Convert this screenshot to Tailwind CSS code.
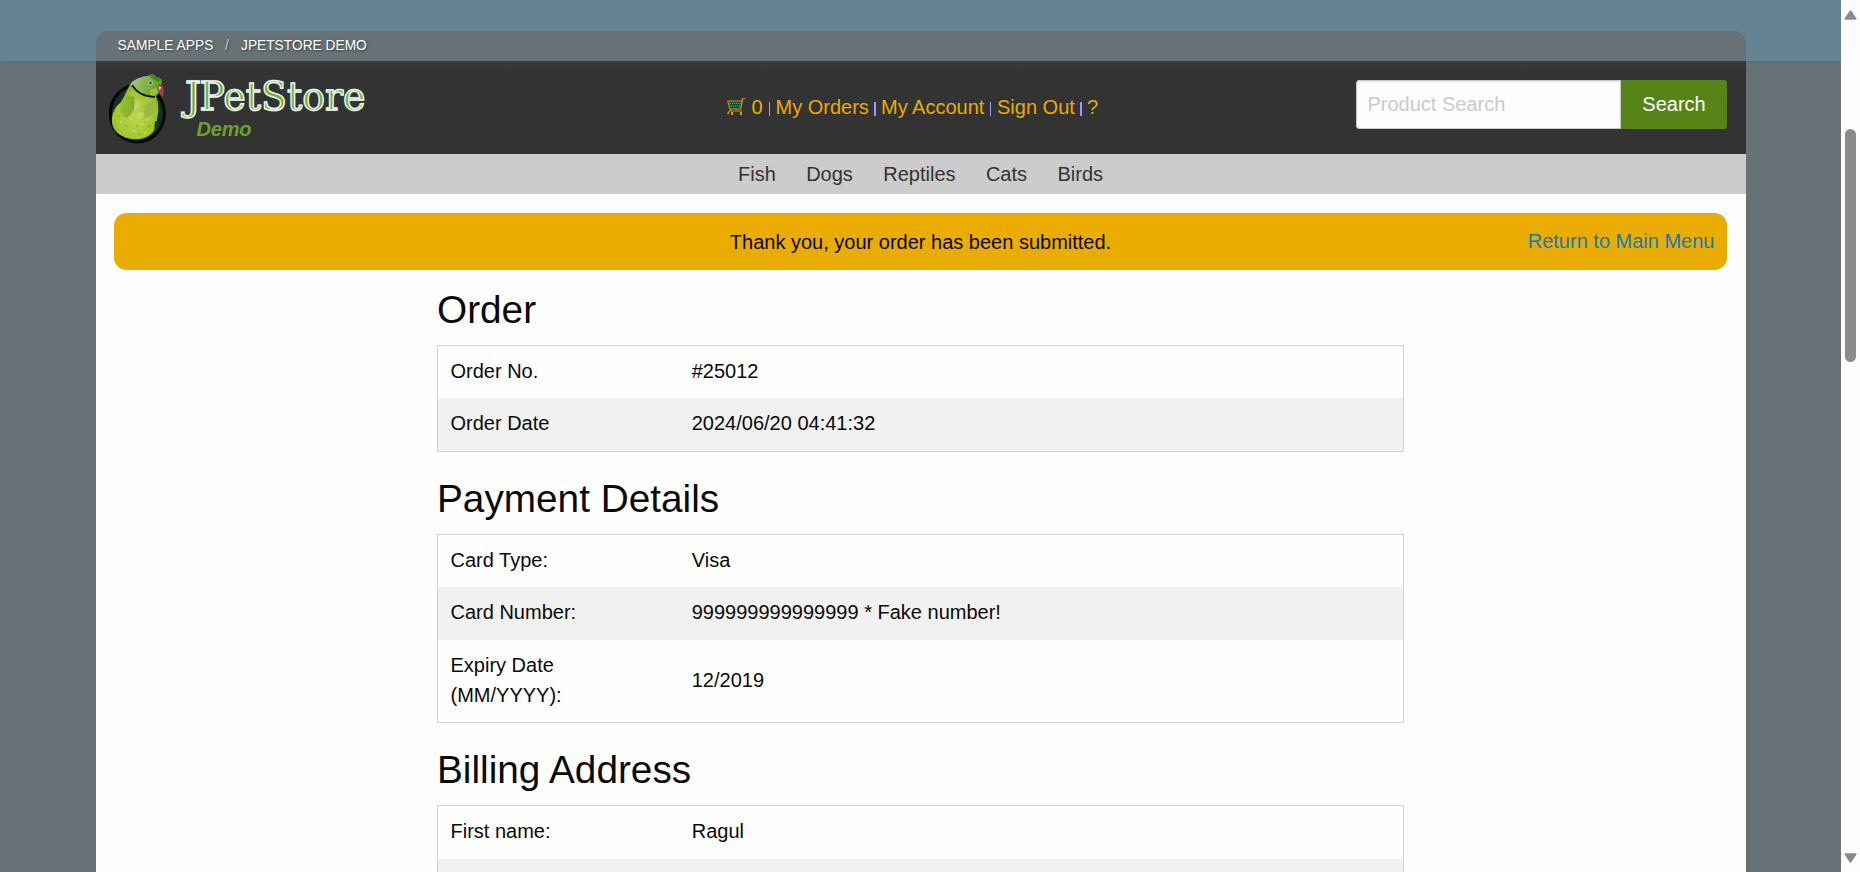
<!DOCTYPE html>
<html lang="en">
<head>
<meta charset="utf-8">
<title>JPetStore Demo</title>
<script src="https://cdn.jsdelivr.net/npm/@tailwindcss/browser@4"></script>
</head>
<body class="flex h-[872px] w-[1860px] overflow-hidden bg-[#677277] font-['Liberation_Sans',Arial,sans-serif] text-[20px] leading-[30px] text-[#0a0a0a]">
<div class="flex h-full w-[1841px] flex-col overflow-hidden">
  <div class="flex h-[61px] shrink-0 items-end bg-[#668394] pr-[95px] pl-24 shadow-[0_1px_2px_rgba(0,0,0,0.06)]">
    <nav class="flex h-[30px] w-full items-center rounded-t-[12px] bg-[#677277] pl-[21.5px] text-[13.75px] leading-[28px] text-white [text-shadow:1px_1px_2px_rgba(0,0,0,0.5)]">
      <a class="w-[107.5px] tracking-[0.03px]">SAMPLE APPS</a><span class="w-[16px] text-[#cacaca]">/</span><a>JPETSTORE DEMO</a>
    </nav>
  </div>

  <div class="mr-[95px] ml-24 flex grow flex-col bg-[#fefefe]">
    <header class="flex h-[93px] shrink-0 bg-[#333] bg-linear-to-b from-[#3c3d3c] to-[#333] to-[10px]">
      <svg class="h-[93px] w-[300px] shrink-0" viewBox="96 61 300 93">
        <defs>
          <radialGradient id="body" cx=".5" cy=".6" r=".6"><stop offset="0" stop-color="#bcd550"/><stop offset=".7" stop-color="#a3c62c"/><stop offset="1" stop-color="#7fab20"/></radialGradient>
          <linearGradient id="wing" x2="1" y2=".4"><stop offset="0" stop-color="#9cc22d"/><stop offset="1" stop-color="#6f9f28"/></linearGradient>
          <linearGradient id="head" x2="1" y2=".3"><stop offset="0" stop-color="#b4c5a6"/><stop offset=".4" stop-color="#8fb95a"/><stop offset="1" stop-color="#5da51c"/></linearGradient>
        </defs>
        <ellipse cx="137.3" cy="113.5" rx="27" ry="28.5" fill="#15302b" stroke="#020807" stroke-width="3"/>
        <path d="M131 83C127 89 125 96 121 102C113 108 110 118 113 127C117 136 128 140 140 139C151 137 157 130 157 119C160 108 158 98 154 93L146 90Z" fill="url(#body)"/>
        <path d="M126 94C122 102 119 106 121 114L127 118C134 111 138 104 134 97Z" fill="url(#wing)" opacity=".75"/>
        <path d="M143 106l10-5 1 11-9 7z" fill="#8ab33f" opacity=".6"/>
        <path d="M134 99l8 3-4 6-4 2zM139 112l5 2-3 5-4-2z" fill="#cddf88" opacity=".5"/>
        <g fill="#d0e56e" opacity=".55"><circle cx="131" cy="119" r="1.5"/><circle cx="142" cy="124" r="1.8"/><circle cx="121" cy="122" r="1.4"/><circle cx="148" cy="119" r="1.3"/><circle cx="134" cy="131" r="1.5"/><circle cx="145" cy="133" r="1.2"/><circle cx="125" cy="132" r="1.1"/></g>
        <g fill="#7fa928" opacity=".5"><circle cx="126" cy="126" r="1.5"/><circle cx="137" cy="126" r="1.3"/><circle cx="149" cy="126" r="1.5"/><circle cx="119" cy="116" r="1.3"/><circle cx="139" cy="134" r="1.3"/></g>
        <path d="M155 121l4 1-1 7-4 4z" fill="#183b19"/>
        <path d="M131 83C135 79 142 76 148 76C151 74 154 74 156 77C162 78 163 81 161 85C161 91 158 97 152 97C143 97 134 92 131 83Z" fill="url(#head)"/>
        <path d="M149 76C151 74 154 74 156 77C159 77 162 79 162 81L158 82L153 79Z" fill="#3c9116"/>
        <path d="M150 90l7-2 1 5-4 3-4-1z" fill="#91c332"/>
        <path d="M131 84C135 91 143 97 153 98" fill="none" stroke="#ddd0c0" stroke-width="1.2"/>
        <path d="M132 85C137 93 145 97 155 97" fill="none" stroke="#12161c" stroke-width="1.7"/>
        <path d="M158 85C162 83 165 88 163 97C161 95 157 91 158 85Z" fill="#a33c4a"/>
        <path d="M158.5 86l3 1.5-2 3z" fill="#ead0cb"/>
        <circle cx="150.5" cy="83" r="2.3" fill="#c5d0bb"/><circle cx="150.5" cy="83" r="1.4" fill="#384b66"/>
        <g font-family="DejaVu Serif, serif" font-size="40" fill="#fff" stroke="#346664" stroke-width="2.6" stroke-linejoin="round" opacity=".7">
          <text x="185" y="109.5">J</text>
          <text x="199.500" y="109.5" textLength="166" lengthAdjust="spacingAndGlyphs">PetStore</text>
        </g>
        <g font-family="DejaVu Serif, serif" font-size="40" fill="#7eaa34" stroke="#f4f8f4" stroke-width="1.4">
          <text x="185" y="109.5">J</text>
          <text x="199.500" y="109.5" textLength="166" lengthAdjust="spacingAndGlyphs">PetStore</text>
        </g>
        <text x="196.5" y="135.5" font-family="Liberation Sans, sans-serif" font-size="20" font-weight="700" font-style="italic" textLength="55" fill="#6ba22b">Demo</text>
      </svg>
      <div class="flex h-[93px] flex-1 items-center pb-[1px] pl-[331px] text-[#eaac00]">
        <svg class="mr-[6.5px] h-[18px] w-[18px]" viewBox="0 0 18 18"><path d="M1 3.5h14l-2 7H3z" fill="#0e4f45"/><path d="M0 3h14.5l1.5-2.500h2M1 4l2 7M15.500 2L13.500 11M3 11h10.500M4 13h11M4 11.500L1 15M0 15.500h2" fill="none" stroke="#c99900" stroke-width="1.2"/><path d="M3 5.500h11M4 8h10" stroke="#8f9a45" stroke-width="1" stroke-dasharray="1 1"/><path d="M4 14h2v3H4zM13 14h2v3h-2z" fill="#d8a000"/></svg>
        <span class="w-[17.5px]">0</span><i class="mt-[3px] mr-[5.5px] h-[14px] w-px bg-[#9999ff]"></i>
        <a class="w-[98.5px]">My Orders</a><i class="mt-[3px] mr-[5px] h-[14px] w-[2px] bg-[#9999ff]"></i>
        <a class="w-[109px]">My Account</a><i class="mt-[3px] mr-[6px] h-[14px] w-px bg-[#9999ff]"></i>
        <a class="w-[83px]">Sign Out</a><i class="mt-[3px] mr-[5px] h-[14px] w-[2px] bg-[#9999ff]"></i>
        <a>?</a>
      </div>
      <form class="mt-[19px] mr-[19px] flex h-[49px] w-[371px] shrink-0">
        <input class="h-full w-[265px] rounded-l-[3px] border border-[#cacaca] bg-[#fefefe] px-[10.5px] pb-[1px] shadow-[inset_0_1px_2px_rgba(10,10,10,0.1)] placeholder:text-[#cacaca]" placeholder="Product Search">
        <button type="button" class="h-full w-[106px] rounded-r-[3px] bg-[#578417] pb-[2px] text-[#fefefe]">Search</button>
      </form>
    </header>
    <nav class="flex h-10 shrink-0 items-center justify-center gap-[30.4px] bg-[#ccc] pr-[1px] text-[#333]">
      <a>Fish</a><a>Dogs</a><a>Reptiles</a><a>Cats</a><a>Birds</a>
    </nav>

    <main class="px-[18px] pt-[19px]">
      <div class="relative mr-[1px] flex h-[57px] items-center justify-center rounded-[12.5px] bg-[#eaac00]">
        <p>Thank you, your order has been submitted.</p>
        <a class="absolute top-[13px] right-[12.5px] text-[#1779ba]">Return to Main Menu</a>
      </div>
      <div class="ml-[323px] mt-[13px] w-[967px]">
        <h3 class="mb-[7.75px] text-[38.75px] leading-[54.25px]">Order</h3>
        <table class="mb-5 w-full table-fixed border-separate border-spacing-0 border border-[#d3d3d3]">
          <colgroup><col class="w-1/4"><col></colgroup>
          <tbody>
            <tr class="h-[52px]"><td class="px-[12.5px] pt-[10px] pb-[12px]">Order No.</td><td class="px-[12.5px] pt-[10px] pb-[12px]">#25012</td></tr>
            <tr class="h-[53px] bg-[#f1f1f1]"><td class="px-[12.5px] pt-[10px] pb-[13px]">Order Date</td><td class="px-[12.5px] pt-[10px] pb-[13px]">2024/06/20 04:41:32</td></tr>
          </tbody>
        </table>
        <h3 class="mb-[7.75px] text-[38.75px] leading-[54.25px]">Payment Details</h3>
        <table class="mb-5 w-full table-fixed border-separate border-spacing-0 border border-[#d3d3d3]">
          <colgroup><col class="w-1/4"><col></colgroup>
          <tbody>
            <tr class="h-[52px]"><td class="px-[12.5px] pt-[10px] pb-[12px]">Card Type:</td><td class="px-[12.5px] pt-[10px] pb-[12px]">Visa</td></tr>
            <tr class="h-[53px] bg-[#f1f1f1]"><td class="px-[12.5px] pt-[10px] pb-[13px]">Card Number:</td><td class="px-[12.5px] pt-[10px] pb-[13px]">999999999999999 * Fake number!</td></tr>
            <tr class="h-[82px]"><td class="px-[12.5px] pt-[10px] pb-[12px]">Expiry Date<br>(MM/YYYY):</td><td class="px-[12.5px] pt-[10px] pb-[12px]">12/2019</td></tr>
          </tbody>
        </table>
        <h3 class="mb-[7.75px] text-[38.75px] leading-[54.25px]">Billing Address</h3>
        <table class="w-full table-fixed border-separate border-spacing-0 border border-[#d3d3d3]">
          <colgroup><col class="w-1/4"><col></colgroup>
          <tbody>
            <tr class="h-[53px]"><td class="px-[12.5px] pt-[10px] pb-[13px]">First name:</td><td class="px-[12.5px] pt-[10px] pb-[13px]">Ragul</td></tr>
            <tr class="bg-[#f1f1f1]"><td class="h-[53px]"></td><td></td></tr>
          </tbody>
        </table>
      </div>
    </main>
  </div>
</div>
<div class="flex h-full w-[19px] shrink-0 flex-col items-center bg-[#fcfcfc] pt-[10px] pb-[9px]">
  <svg class="h-[10px] w-[13px] shrink-0" viewBox="0 0 13 10"><path d="M6.5 1.2 11.5 8.7H1.5Z" fill="#8b8b8b" stroke="#8b8b8b" stroke-width="2" stroke-linejoin="round"/></svg>
  <div class="mt-[109px] h-[233px] w-[11px] shrink-0 rounded-full bg-[#8b8b8b]"></div>
  <svg class="mt-auto h-[10px] w-[13px] shrink-0" viewBox="0 0 13 10"><path d="M6.5 8.8 11.5 1.3H1.5Z" fill="#8b8b8b" stroke="#8b8b8b" stroke-width="2" stroke-linejoin="round"/></svg>
</div>
</body>
</html>
